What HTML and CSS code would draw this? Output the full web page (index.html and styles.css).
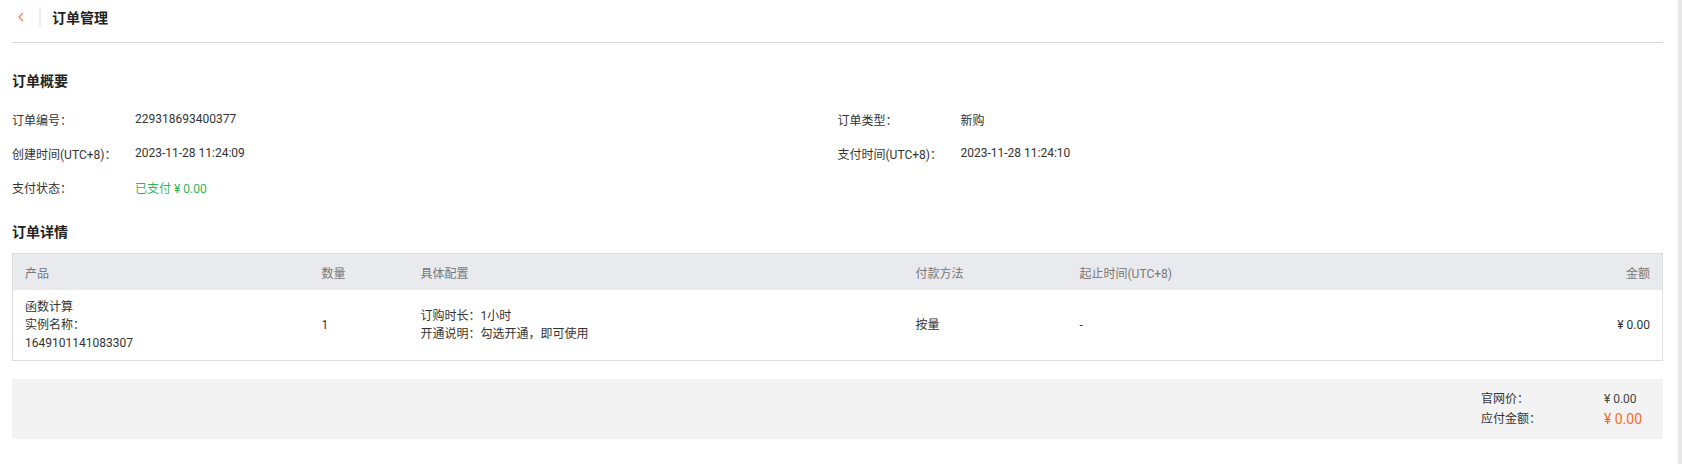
FILE: index.html
```html
<!DOCTYPE html>
<html lang="zh-CN">
<head>
    <meta charset="UTF-8">
    <title>订单管理</title>
    <link rel="stylesheet" href="styles.css">
</head>
<body>
    <div class="page">
        <div class="topbar">
            <span class="back">
                <svg width="8" height="10" viewBox="0 0 8 10"><path d="M6 1 L2 5 L6 9" fill="none" stroke="#f5845a" stroke-width="1.3"/></svg>
            </span>
            <span class="divider"></span>
            <h1>订单管理</h1>
        </div>

        <h2 class="section-title first">订单概要</h2>
        <div class="summary-grid">
            <div class="field"><span class="label">订单编号：</span><span class="value">229318693400377</span></div>
            <div class="field"><span class="label">订单类型：</span><span class="value">新购</span></div>
            <div class="field"><span class="label">创建时间(UTC+8)：</span><span class="value">2023-11-28 11:24:09</span></div>
            <div class="field"><span class="label">支付时间(UTC+8)：</span><span class="value">2023-11-28 11:24:10</span></div>
            <div class="field"><span class="label">支付状态：</span><span class="value paid">已支付 ¥ 0.00</span></div>
        </div>

        <h2 class="section-title">订单详情</h2>
        <table class="detail-table">
            <colgroup>
                <col style="width: 297px">
                <col style="width: 99px">
                <col style="width: 495px">
                <col style="width: 164px">
                <col>
                <col style="width: 200px">
            </colgroup>
            <thead>
                <tr>
                    <th>产品</th>
                    <th>数量</th>
                    <th>具体配置</th>
                    <th>付款方法</th>
                    <th>起止时间(UTC+8)</th>
                    <th class="amount">金额</th>
                </tr>
            </thead>
            <tbody>
                <tr>
                    <td>函数计算<br>实例名称：<br>1649101141083307</td>
                    <td>1</td>
                    <td>订购时长：1小时<br>开通说明：勾选开通，即可使用</td>
                    <td>按量</td>
                    <td>-</td>
                    <td class="amount">¥ 0.00</td>
                </tr>
            </tbody>
        </table>

        <div class="total-box">
            <div class="total-grid">
                <span class="label">官网价：</span><span class="price">¥ 0.00</span>
                <span class="label">应付金额：</span><span class="price pay">¥ 0.00</span>
            </div>
        </div>
    </div>
    <div class="scroll-track"></div>
</body>
</html>
```

FILE: styles.css
```css
html, body {
    margin: 0;
    height: 100%;
}

body {
    display: flex;
    font-family: Roboto, "Noto Sans CJK SC", sans-serif;
    font-size: 12px;
    color: #333;
    background: #fff;
}

.page {
    flex: 1;
    padding: 0 15px 0 12px;
}

.scroll-track {
    width: 4px;
    background: #e8e8e8;
}

.topbar {
    display: flex;
    align-items: center;
    height: 34px;
    padding-bottom: 8px;
    border-bottom: 1px solid #d6d6d6;
}

.back {
    display: flex;
    width: 27px;
    padding-left: 5px;
    box-sizing: border-box;
}

.divider {
    width: 2px;
    height: 20px;
    background: #ececec;
    margin-right: 11px;
}

.topbar h1 {
    margin: 0;
    font-size: 14px;
    font-weight: bold;
    color: #222;
}

.section-title {
    margin: 0;
    font-size: 14px;
    font-weight: bold;
    color: #222;
    line-height: 20px;
    padding-top: 10px;
    padding-bottom: 10px;
}

.section-title.first {
    padding-top: 28px;
    padding-bottom: 11px;
}

.summary-grid {
    display: grid;
    grid-template-columns: 1fr 1fr;
    margin-bottom: 8px;
}

.field {
    display: flex;
    height: 34px;
    align-items: center;
}

.label {
    width: 123px;
    color: #333;
}

.value {
    color: #333;
}

.paid {
    color: #2fb35a;
}

.detail-table {
    width: 100%;
    border-collapse: collapse;
    table-layout: fixed;
    border: 1px solid #dedede;
    margin-top: 1px;
}

.detail-table th {
    background: #e9eaed;
    color: #777;
    font-weight: normal;
    text-align: left;
    height: 36px;
    padding: 0 12px;
}

.detail-table td {
    padding: 8px 12px;
    line-height: 18px;
    vertical-align: middle;
    color: #333;
}

.detail-table .amount {
    text-align: right;
}

.total-box {
    margin-top: 18px;
    background: #f3f3f3;
    height: 60px;
    display: flex;
    justify-content: flex-end;
    align-items: center;
    padding-right: 21px;
}

.total-grid {
    display: grid;
    grid-template-columns: 123px auto;
    align-items: center;
}

.total-grid span {
    line-height: 20px;
}

.price {
    color: #444;
}

.price.pay {
    color: #ff6a1a;
    font-size: 14px;
}
```
